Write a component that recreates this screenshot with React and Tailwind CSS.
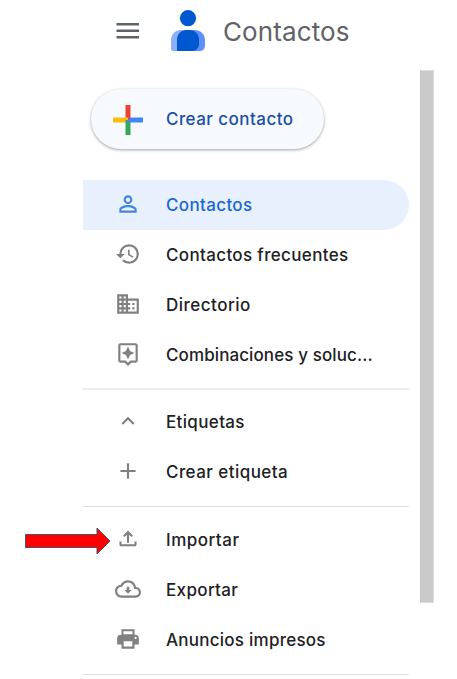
const icons = {
  person:
    'M12 5.9a2.1 2.1 0 1 1 0 4.2 2.1 2.1 0 0 1 0-4.2m0 9c2.97 0 6.1 1.46 6.1 2.1v1.1H5.9V17c0-.64 3.13-2.1 6.1-2.1M12 4C9.79 4 8 5.79 8 8s1.79 4 4 4 4-1.79 4-4-1.79-4-4-4zm0 9c-2.67 0-8 1.34-8 4v3h16v-3c0-2.66-5.33-4-8-4z',
  history:
    'M13 3a9 9 0 0 0-9 9H1l3.89 3.89.07.14L9 12H6c0-3.87 3.13-7 7-7s7 3.13 7 7-3.13 7-7 7c-1.93 0-3.68-.79-4.94-2.06l-1.42 1.42A8.954 8.954 0 0 0 13 21a9 9 0 0 0 0-18zm-1 5v5l4.28 2.54.72-1.21-3.5-2.08V8H12z',
  domain:
    'M12 7V3H2v18h20V7H12zM6 19H4v-2h2v2zm0-4H4v-2h2v2zm0-4H4V9h2v2zm0-4H4V5h2v2zm4 12H8v-2h2v2zm0-4H8v-2h2v2zm0-4H8V9h2v2zm0-4H8V5h2v2zm10 12h-8v-2h2v-2h-2v-2h2v-2h-2V9h8v10zm-2-8h-2v2h2v-2zm0 4h-2v2h2v-2z',
  assistant:
    'M19 2H5a2 2 0 0 0-2 2v14c0 1.1.9 2 2 2h4l3 3 3-3h4c1.1 0 2-.9 2-2V4c0-1.1-.9-2-2-2zm0 16h-4.83L12 20.17 9.83 18H5V4h14v14zm-7-1 1.88-4.12L18 11l-4.12-1.88L12 5l-1.88 4.12L6 11l4.12 1.88z',
  up: 'M7.41 15.41 12 10.83l4.59 4.58L18 14l-6-6-6 6z',
  add: 'M19 13h-6v6.200h-2V13H5v-2h6V4.800h2V11h6z',
  upload:
    'M11 15.500V8L8.800 10.200 7.400 8.800 12 4.200l4.600 4.600-1.400 1.400L13 8v7.500zM4.100 14.300h1.900v2.500h12v-2.500h1.900v2.700c0 1-.8 1.800-1.800 1.800H5.900c-1 0-1.800-.8-1.800-1.800z',
  cloud:
    'M19.35 10.04C18.67 6.59 15.64 4 12 4 9.11 4 6.6 5.64 5.35 8.04 2.34 8.36 0 10.91 0 14c0 3.31 2.69 6 6 6h13c2.76 0 5-2.24 5-5 0-2.64-2.05-4.78-4.65-4.96zM19 18H6c-2.21 0-4-1.79-4-4 0-2.05 1.53-3.76 3.56-3.97l1.07-.11.5-.95C8.08 7.14 9.94 6 12 6c2.62 0 4.88 1.86 5.39 4.43l.3 1.5 1.53.11c1.56.1 2.78 1.41 2.78 2.96 0 1.65-1.35 3-3 3zM13.2 10h-2.4v3H8.6l3.4 3.4 3.4-3.4h-2.2z',
  print:
    'M19 8H5c-1.66 0-3 1.34-3 3v6h4v4h12v-4h4v-6c0-1.66-1.34-3-3-3zm-3 11H8v-5h8v5zm3-7c-.55 0-1-.45-1-1s.45-1 1-1 1 .45 1 1-.45 1-1 1zM18 3H6v5h12V3zM16.2 4.800v2.700H7.800V4.800z',
};

function Icon({ name }) {
  return (
    <svg viewBox="0 0 24 24" className="h-[26px] w-[26px] shrink-0" fill="currentColor" fillRule="evenodd">
      <path d={icons[name]} />
    </svg>
  );
}

function Row({ icon, label, tracking, active, children }) {
  return (
    <a
      className={`relative flex h-[50px] items-center pl-8 ${
        active ? 'rounded-r-full bg-[#e8f0fe] text-[#1967d2]' : 'text-[#202124]'
      }`}
    >
      {children}
      <span className={active ? 'mb-[2px] flex text-[#4285dc]' : 'mb-[2px] flex text-[#808080]'}>
        <Icon name={icon} />
      </span>
      <span className={`ml-[25px] whitespace-nowrap text-[17px] font-medium leading-6 ${tracking}`}>{label}</span>
    </a>
  );
}

function Divider() {
  return <div className="mb-[7px] mt-2 h-[2px] bg-[#ececec]" />;
}

function Arrow() {
  return (
    <svg viewBox="0 0 86 28" className="absolute -left-[58px] top-[12px] h-7 w-[86px]">
      <path d="M.5 7.5h71.500V1L85 14 72 27v-6.500H.5z" fill="#fe0000" stroke="#44546f" />
    </svg>
  );
}

export default function App() {
  return (
    <div className="flex h-[679px] w-[457px] overflow-hidden bg-white pl-[83px] font-['Inter','Open_Sans',sans-serif]">
      <div className="w-[326px]">
        <header className="flex h-[62px] items-center pl-8">
          <svg viewBox="0 0 26 18" className="h-[18px] w-[26px]" fill="#5f6368">
            <path d="M1.500 1h22.500v2.500h-22.500zM1.500 7.500h22.500V10h-22.500zM1.500 14h22.500v2.500h-22.500z" />
          </svg>
          <svg viewBox="0 0 36 42" className="ml-[29px] h-[42px] w-9">
            <path d="M1 39V31C1 24 5 20 11 20h10v21H3c-1.300 0-2-.7-2-2z" fill="#8ab0fc" />
            <path d="M14 20h10c7 0 11 4 11 11v4c0 4-2 6-6 6H14z" fill="#5c91fc" />
            <path d="M7 41V30c0-6 4-10 10-10h2c6 0 10 4 10 10v4c0 4-3 7-7 7z" fill="#0057cf" />
            <circle cx="18" cy="8.200" r="8.100" fill="#0057cf" />
          </svg>
          <h1 className="ml-[17px] mt-[2px] text-[26px] leading-8 tracking-[0.1px] text-[#5f6368]">Contactos</h1>
        </header>

        <button className="ml-2 mt-[27px] flex h-[60px] w-[233px] items-center rounded-full bg-[#f6faff] pl-[22px] shadow-[0_1px_2px_#3c40434d,0_1px_3px_1px_#3c404326]">
          <svg viewBox="0 0 30 30" className="mt-px h-[30px] w-[30px]">
            <path d="M12.500 0h5v15h-5z" fill="#ea4335" />
            <path d="M0 12.500h15v5H0z" fill="#fbbc04" />
            <path d="M12.500 15h5v15h-5z" fill="#34a853" />
            <path d="M17.500 12.500H30v5H12.500z" fill="#4285f4" />
          </svg>
          <span className="ml-[23px] mt-[2px] whitespace-nowrap text-[17px] font-medium tracking-[0.45px] text-[#1a4fa8]">
            Crear contacto
          </span>
        </button>

        <nav className="mt-[31px]">
          <Row icon="person" label="Contactos" tracking="tracking-[0.35px]" active />
          <Row icon="history" label="Contactos frecuentes" tracking="tracking-[0.35px]" />
          <Row icon="domain" label="Directorio" tracking="tracking-[0.5px]" />
          <Row icon="assistant" label="Combinaciones y soluc..." tracking="tracking-[0.1px]" />
          <Divider />
          <Row icon="up" label="Etiquetas" tracking="tracking-[0.35px]" />
          <Row icon="add" label="Crear etiqueta" tracking="tracking-[0.45px]" />
          <div className="mb-2 mt-[9px] h-px bg-[#dedede]" />
          <Row icon="upload" label="Importar" tracking="tracking-[0.5px]">
            <Arrow />
          </Row>
          <Row icon="cloud" label="Exportar" tracking="tracking-[0.35px]" />
          <Row icon="print" label="Anuncios impresos" tracking="tracking-[0.25px]" />
          <div className="mt-[9px] h-px bg-[#dedede]" />
        </nav>
      </div>
      <div className="ml-[11px] mt-[70px] h-[533px] w-[14px] border border-[#dcdcdc] border-l-[#c4c4c4] bg-[#cacaca]" />
    </div>
  );
}
